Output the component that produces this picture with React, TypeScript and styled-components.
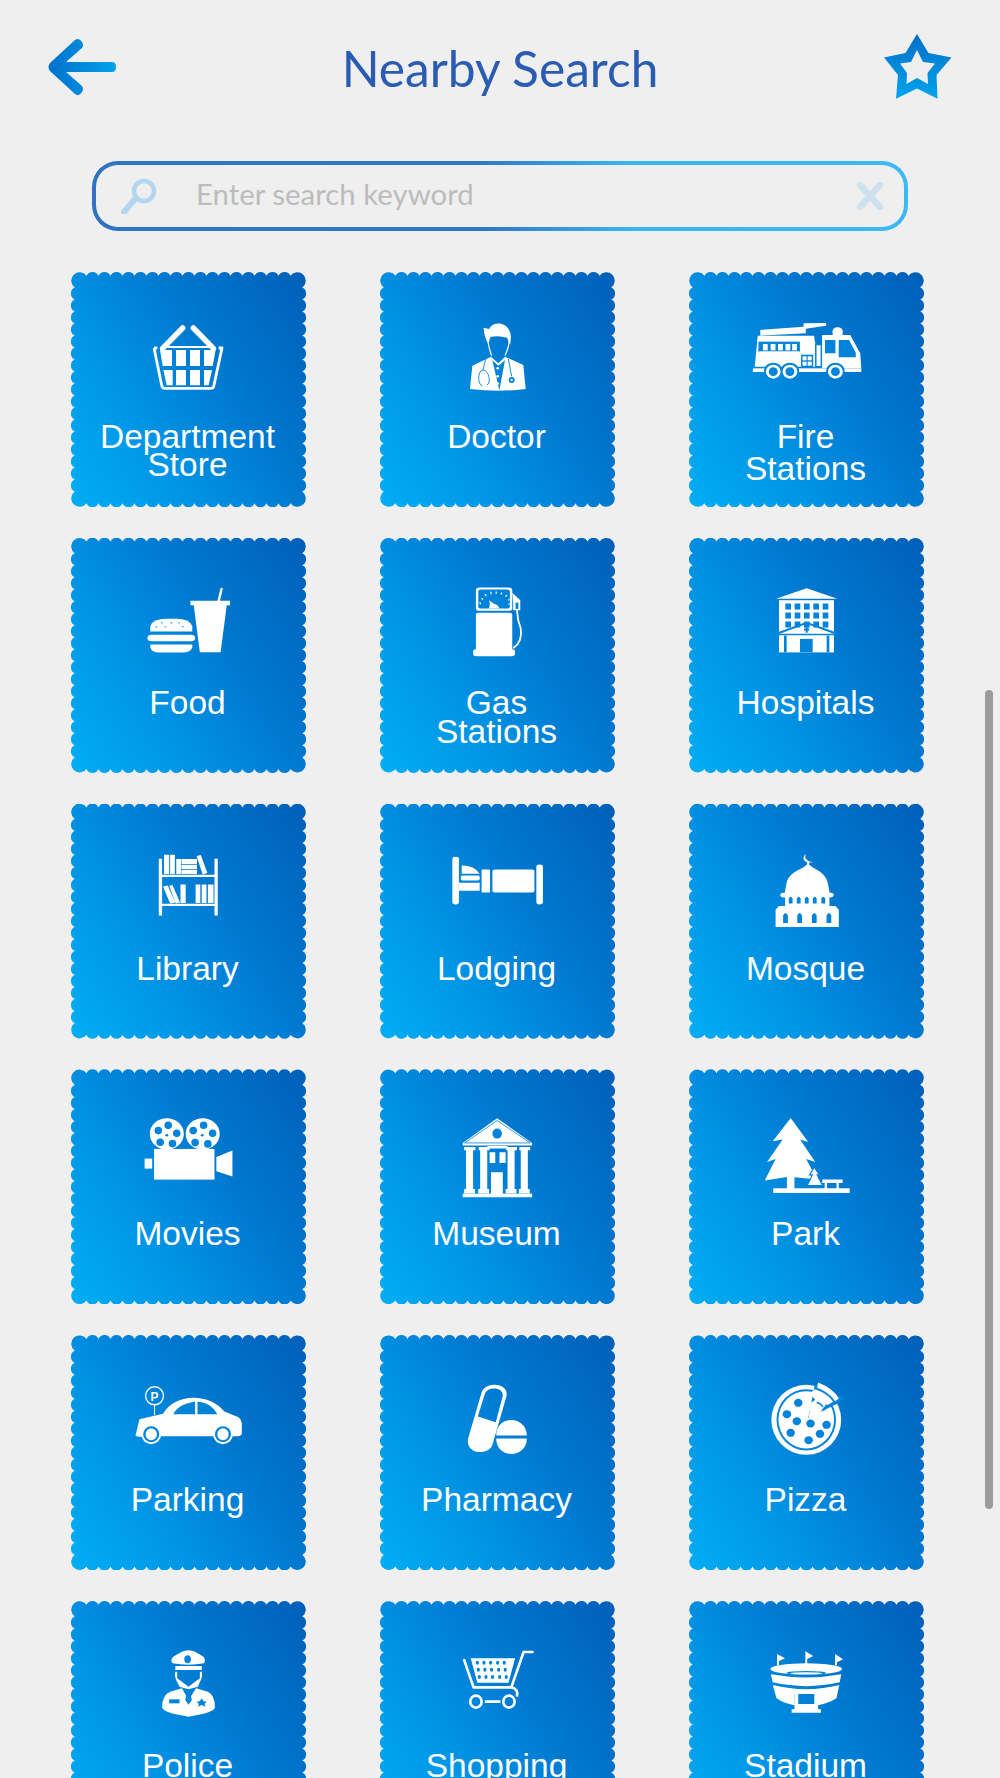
import React from "react";
import styled, { createGlobalStyle } from "styled-components";

const CUT = "#0183d9";

const buildScallop = () => {
  const W = 235, s = 3.8, c = 15.5, n = 17;
  const p = (W - 2 * c) / n;
  const r = 6.58, R = 8.4;
  let d = `M${c} ${s}`;
  for (let i = 0; i < n; i++) d += `a${r} ${r} 0 0 1 ${p} 0`;
  d += `A${R} ${R} 0 1 1 ${W - s} ${c}`;
  for (let i = 0; i < n; i++) d += `a${r} ${r} 0 0 1 0 ${p}`;
  d += `A${R} ${R} 0 1 1 ${W - c} ${W - s}`;
  for (let i = 0; i < n; i++) d += `a${r} ${r} 0 0 1 ${-p} 0`;
  d += `A${R} ${R} 0 1 1 ${s} ${W - c}`;
  for (let i = 0; i < n; i++) d += `a${r} ${r} 0 0 1 0 ${-p}`;
  d += `A${R} ${R} 0 1 1 ${c} ${s}Z`;
  return d;
};

const Global = createGlobalStyle`
  html, body { margin: 0; padding: 0; background: #efefef; }
  body { font-family: "Liberation Sans", Arial, sans-serif; }
`;

const Page = styled.div`
  position: relative;
  width: 1000px;
  height: 1778px;
  overflow: hidden;
  background: #efefef;
`;

const Header = styled.header`
  display: flex;
  align-items: center;
  height: 134px;
  padding: 0 48px 0 46px;
`;

const Title = styled.h1`
  flex: 1;
  margin: 2px 0 0;
  text-align: center;
  font-family: Lato, "Open Sans", sans-serif;
  font-weight: 400;
  font-size: 49.7px;
  line-height: 60px;
  color: #2a5cb2;
`;

const SearchWrap = styled.div`
  padding: 27px 92px 0;
`;

const SearchBar = styled.div`
  display: flex;
  align-items: center;
  height: 70px;
  box-sizing: border-box;
  border: 4.5px solid transparent;
  border-radius: 26px;
  background:
    linear-gradient(#efefef, #efefef) padding-box,
    linear-gradient(84deg, #2f73c1 0%, #2f7ac8 48%, #39b6f3 66%, #3bb9f5 100%) border-box;
  padding: 0 19px 0 23px;
`;

const Placeholder = styled.span`
  flex: 1;
  margin: 0 0 4px 39px;
  font-family: Lato, "Open Sans", sans-serif;
  font-size: 29.4px;
  line-height: 40px;
  color: #bcbcbc;
`;

const Grid = styled.main`
  display: grid;
  grid-template-columns: repeat(3, 235px);
  column-gap: 74px;
  row-gap: 30.8px;
  padding: 41px 0 0 71px;
`;

const Tile = styled.div`
  width: 235px;
  height: 235px;
  display: flex;
  flex-direction: column;
  align-items: center;
  background: linear-gradient(58deg, #00aef4 0%, #0096e6 30%, #0078d0 62%, #005fb8 100%);
  clip-path: path("${buildScallop()}");
`;

const IconCanvas = styled.svg`
  display: block;
  width: 235px;
  height: 140px;
  flex: none;
  fill: #fff;
  & * { vector-effect: non-scaling-stroke; }
`;

const Label = styled.div<{ $lh: number }>`
  margin-top: ${(p) => 25 - p.$lh / 2}px;
  padding-right: 2px;
  font-size: 33.5px;
  line-height: ${(p) => p.$lh}px;
  color: #fff;
  text-align: center;
`;

const Scrollbar = styled.div`
  position: absolute;
  left: 985px;
  top: 690px;
  width: 8px;
  height: 819px;
  border-radius: 4px;
  background: #9b9b9b;
`;

const Z: React.FC<{ x: number; y: number; sx: number; children: React.ReactNode }> = ({ x, y, sx, children }) => (
  <g transform={`translate(${x} ${y}) scale(${1 / sx} ${1 / 3})`}>{children}</g>
);

const rows = (xs: number[], ys: number[], w: number, h: number, fill = CUT) =>
  ys.flatMap((y) => xs.map((x) => <rect key={`${x}-${y}`} x={x} y={y} width={w} height={h} fill={fill} />));

const dots = (pts: number[][], rx: number, ry: number, fill = CUT) =>
  pts.map(([x, y]) => <ellipse key={`${x}-${y}`} cx={x} cy={y} rx={rx} ry={ry} fill={fill} />);

const Basket = () => (
  <Z x={-21} y={-12} sx={3}>
    <path d="M338 265L398 204M490 265L430 204" stroke="#fff" strokeWidth={5.5} strokeLinecap="round" />
    <path d="M352 261H480" stroke="#fff" strokeWidth={2} />
    <path d="M312 264H322M506 264H516L491 380Q489 385 482 385H345Q338 385 336 380L312 264" stroke="#fff" strokeWidth={2.8} fill="none" strokeLinejoin="round" />
    <path d="M330 270H366V318H338ZM378 270H408V318H378ZM420 270H450V318H420ZM462 270H497L488 318H462ZM340 330H368V376H350ZM378 330H408V376H378ZM420 330H450V376H420ZM462 330H486L476 376H462Z" />
  </Z>
);

const Doctor = () => (
  <Z x={75} y={43} sx={3}>
    <path d="M86 38L102 42C115 18 152 22 162 45C170 58 168 75 165 90L156 68Q130 60 106 66L100 88Q86 62 86 38Z" />
    <path d="M100 72C98 90 104 105 110 122M162 72C164 90 158 105 150 122" stroke="#fff" strokeWidth={1.2} fill="none" />
    <path d="M45 222L52 152L108 125L130 145L150 125L205 150L212 222Q130 232 45 222Z" />
    <path d="M112 136L130 152L150 136L133 226Z" fill={CUT} />
    {dots([[128, 160], [128, 184], [128, 206]], 4, 4, "#fff")}
    <path d="M92 132L84 165M84 165C66 168 68 210 82 212M84 165C104 168 108 205 96 210M160 132L170 184" stroke={CUT} strokeWidth={0.9} fill="none" />
    <circle cx={170} cy={195} r={9} fill={CUT} />
    <circle cx={170} cy={195} r={3.5} />
  </Z>
);

const FireTruck = () => (
  <Z x={-319} y={-2} sx={2.703}>
    <path d="M1055 180L1172 170V160L1233 159V167L1178 176V190L1055 197Z" />
    <path d="M1048 197H1200L1204 223V290H1040Z" />
    <rect x="1050" y="215" width="112" height="32" fill={CUT} />
    {rows([1062, 1083, 1103, 1123, 1141], [222], 13, 19, "#fff")}
    <path d="M1052 247H1161" stroke="#fff" strokeWidth={2} />
    <rect x="1165" y="254" width="33" height="40" fill={CUT} />
    {rows([1169, 1183], [259, 275], 11, 12, "#fff")}
    <rect x="1203" y="222" width="19" height="72" fill={CUT} />
    <rect x="1207" y="226" width="11" height="62" />
    <rect x="1250" y="172" width="28" height="30" rx="13" />
    <path d="M1222 195H1298L1325 250L1328 295H1222Z" />
    <path d="M1230 210H1258V250H1230ZM1267 210H1295L1313 248V262H1267Z" fill={CUT} />
    <rect x="1035" y="295" width="293" height="11" />
    {[1090, 1135, 1258].map((cx) => (
      <g key={cx}>
        <ellipse cx={cx} cy={303} rx={25} ry={25} fill={CUT} />
        <ellipse cx={cx} cy={305} rx={20} ry={21} />
        <ellipse cx={cx} cy={305} rx={12} ry={13} fill={CUT} />
      </g>
    ))}
  </Z>
);

const Food = () => (
  <Z x={59} y={32.2} sx={2.119}>
    <path d="M188 92L194 56" stroke="#fff" strokeWidth={2.4} strokeLinecap="round" />
    <path d="M128 92H212V105H205L192 246H148L135 105H128Z" />
    <path d="M43 184V168Q48 146 78 146H98Q126 146 132 168V184Z" />
    {dots([[67, 158], [88, 158], [104, 158], [56, 170], [75, 170], [112, 170]], 2, 2)}
    <rect x="37" y="194" width="101" height="19" rx="9" />
    <path d="M43 223H132V232Q128 247 112 247H62Q46 247 43 232Z" />
  </Z>
);

const GasPump = () => (
  <Z x={-250} y={32.2} sx={2.119}>
    <rect x="733" y="52" width="77" height="70" rx="8" />
    <rect x="738" y="58" width="67" height="57" rx="6" fill={CUT} />
    <path d="M743 102L741 96M748 88L745 84M755 78L752 72M765 72V65M776 71V64M786 73L788 67M796 79L799 75M801 90L804 88M802 102L805 101" stroke="#fff" strokeWidth={1.2} />
    <path d="M760 115Q764 105 761 90L771 101Q782 105 782 115Z" />
    <rect x="733" y="128" width="77" height="115" rx="6" />
    <rect x="727" y="237" width="89" height="21" rx="7" />
    <path d="M820 120Q821 150 828 175Q832 215 812 234" stroke="#fff" strokeWidth={1.8} fill="none" />
    <path d="M810 68L827 90V120H812V96Z" />
    <rect x="817" y="97" width="6" height="19" fill={CUT} />
  </Z>
);

const Hospital = () => (
  <Z x={71} y={42.2} sx={3}>
    <path d="M48 56L140 24L232 56Z" />
    <rect x="57" y="60" width="165" height="156" />
    {rows([76, 104, 132, 160, 188], [70, 97, 124], 17, 18)}
    <path d="M58 166H222V216H58Z" />
    <path d="M52 160L140 128L228 160" stroke={CUT} strokeWidth={2} fill="none" />
    <path d="M52 163H228" stroke={CUT} strokeWidth={1.5} />
    <path d="M132 145H137V138H143V145H148V151H143V158H137V151H132Z" fill={CUT} />
    <rect x="72" y="166" width="8" height="50" fill={CUT} />
    <rect x="200" y="166" width="8" height="50" fill={CUT} />
    <rect x="120" y="176" width="38" height="40" fill={CUT} />
  </Z>
);

const Library = () => (
  <Z x={59} y={36.4} sx={2.119}>
    <path d="M61 55H68V225H61ZM179 55H186V225H179ZM61 103H186V110H61ZM61 190H186V197H61Z" />
    <path d="M72 43H83V101H72ZM85 43H95V101H85ZM98 56H108V101H98ZM109 56H142V71H109ZM109 73H142V86H109ZM109 88H142V101H109ZM141 47L150 44L164 98L154 102Z" />
    <path d="M70 138L80 135L96 186L85 189ZM83 136L90 134L106 186L97 189ZM107 132H118V188H107ZM139 132H149V188H139ZM152 132H162V188H152ZM165 132H177V188H165Z" />
  </Z>
);

const Bed = () => (
  <Z x={-250} y={36.4} sx={2.119}>
    <rect x="683" y="49" width="14" height="143" rx="7" />
    <rect x="861" y="72" width="14" height="120" rx="7" />
    <path d="M703 75Q730 75 741 100H703Z" />
    <rect x="701" y="105" width="40" height="15" rx="4" />
    <rect x="697" y="127" width="44" height="24" />
    <rect x="745" y="87" width="18" height="69" rx="2" />
    <rect x="768" y="87" width="89" height="69" rx="5" />
  </Z>
);

const Mosque = () => (
  <Z x={-559} y={36.4} sx={2.119}>
    <path d="M1433 40Q1425 58 1447 66Q1438 68 1431 63Q1422 52 1433 40Z" />
    <rect x="1435" y="62" width="4" height="12" />
    <path d="M1437 70C1425 88 1396 92 1391 130L1387 160H1483L1479 130C1474 92 1449 88 1437 70Z" />
    <rect x="1378" y="157" width="113" height="14" rx="7" />
    <rect x="1388" y="168" width="94" height="32" />
    <path d="M1375 197H1495L1502 208V260H1368V208Z" />
    {[1400, 1417, 1434, 1451, 1469].map((x) => (
      <path key={x} d="M-4 189V174Q0 164 4 174V189Z" transform={`translate(${x} 0)`} fill={CUT} />
    ))}
    {[1389, 1419, 1450, 1481].map((x) => (
      <path key={x} d="M-5 248V225Q0 210 5 225V248Z" transform={`translate(${x} 0)`} fill={CUT} />
    ))}
  </Z>
);

const Movies = () => (
  <Z x={59} y={30.6} sx={2.119}>
    <ellipse cx="78" cy="103" rx="36" ry="47" />
    <ellipse cx="154" cy="103" rx="36" ry="47" />
    {dots([[81, 77], [60, 93], [99, 101], [64, 128], [90, 132], [156, 77], [134, 93], [175, 101], [138, 129], [165, 133]], 8, 11.5)}
    {dots([[78, 107], [153, 107]], 3, 4)}
    <rect x="51" y="148" width="128" height="92" />
    <path d="M183 172L217 153V231L183 215Z" />
    <rect x="31" y="177" width="16" height="30" />
  </Z>
);

const Museum = () => (
  <Z x={-250} y={30.6} sx={2.119}>
    <path d="M778 56L852 130V138H705V130Z" />
    <path d="M778 63L848 130H709Z" fill="none" stroke={CUT} strokeWidth={0.8} />
    <ellipse cx="778" cy="102" rx="10" ry="15" fill={CUT} />
    <path d="M708 142H732V152H727V268H731V282H708V268H712V152H708ZM739 142H762V152H757V268H761V282H738V268H742V152H739ZM797 142H820V152H815V268H819V282H796V268H800V152H797ZM825 142H848V152H843V268H847V282H824V268H828V152H825Z" />
    <path d="M757 139H800V147H757Z" />
    <path d="M762 158H774V190H762ZM783 158H796V190H783ZM765 218H790V284H765Z" />
    <rect x="705" y="282" width="147" height="11" />
  </Z>
);

const Park = () => (
  <Z x={-559} y={30.6} sx={2.119}>
    <path d="M1400 55L1437 127L1420 120L1452 187L1433 178L1456 240L1408 233V268H1392V232L1345 243L1368 178L1350 187L1383 120L1362 125Z" />
    <path d="M1450 203L1461 226H1456L1468 258H1435L1446 226H1440Z" stroke={CUT} strokeWidth={1.2} />
    <rect x="1363" y="266" width="162" height="14" />
    <path d="M1467 240H1510V250H1502V268H1497V250H1477V268H1472V250H1467Z" />
  </Z>
);

const Car = () => (
  <Z x={59} y={34.8} sx={2.119}>
    <ellipse cx="52" cy="78" rx="19" ry="27" fill="none" stroke="#fff" strokeWidth={1.4} />
    <text transform="translate(52 93) scale(2.119 3)" textAnchor="middle" fontFamily="'Liberation Sans', sans-serif" fontWeight="700" fontSize="12" fill="#fff">P</text>
    <path d="M52 105V136" stroke="#fff" strokeWidth={1} />
    <path d="M12 195L20 148L70 132Q90 85 135 84Q175 85 200 125L230 142Q237 150 237 165V190Q237 198 228 199H60L20 201Q10 200 12 195Z" />
    <path d="M92 133Q100 105 138 95V133ZM143 95Q172 98 185 133H143Z" fill={CUT} />
    {[45, 197].map((cx) => (
      <g key={cx}>
        <ellipse cx={cx} cy={193} rx={21} ry={30} />
        <ellipse cx={cx} cy={193} rx={17} ry={24} fill={CUT} />
        <ellipse cx={cx} cy={193} rx={12} ry={18} />
      </g>
    ))}
  </Z>
);

const Pills = () => (
  <Z x={-250} y={34.8} sx={2.119}>
    <path fillRule="evenodd" d="M745 68C752 36 802 36 798 78L768 225C760 258 712 255 716 208ZM752 72L737 140L775 157L790 78C792 52 758 48 752 72Z" />
    <path d="M776 197C776 135 840 135 841 197ZM776 206C776 268 840 268 841 206Z" />
  </Z>
);

const Pizza = () => (
  <Z x={-559} y={34.8} sx={2.119}>
    <ellipse cx="1433" cy="150" rx="74" ry="105" />
    <ellipse cx="1433" cy="150" rx="63" ry="92" fill={CUT} />
    <ellipse cx="1433" cy="150" rx="59" ry="86" />
    {dots([[1416, 99], [1392, 133], [1413, 154], [1442, 161], [1476, 165], [1400, 189], [1462, 192], [1438, 211]], 9, 12)}
    <path d="M1437 145L1452 40L1515 85L1500 100Z" fill={CUT} />
    <path d="M1458 38Q1490 55 1502 86L1494 94Q1480 66 1456 54Z" />
    <path d="M1438 145L1442 100L1452 90L1440 70L1452 58Q1480 72 1490 96L1470 112L1462 130Z" />
    <path d="M1455 98Q1466 102 1468 112M1476 104L1470 122" stroke={CUT} strokeWidth={1.5} fill="none" />
  </Z>
);

const Police = () => (
  <Z x={59} y={29} sx={2.119}>
    <path d="M90 100C82 80 100 75 110 65Q124 56 138 65C148 75 165 80 157 100Q124 108 90 100Z" />
    <ellipse cx="122" cy="88" rx="7" ry="12" fill={CUT} />
    <rect x="96" y="108" width="56" height="12" />
    <path d="M96 125C92 140 102 160 105 170L124 178L144 170C146 160 156 140 152 125L148 125V145L124 170L100 145V125Z" />
    <path d="M68 232Q68 195 85 185L110 175L124 210L140 175L165 185Q180 195 180 232Q180 248 124 260Q68 248 68 232Z" />
    <path d="M118 178H130L124 190ZM120 190H128L131 210L124 224L117 210Z" fill={CUT} />
    <rect x="83" y="208" width="22" height="12" fill={CUT} />
    <path d="M152 205L156 214L163 215L158 221L160 230L152 225L144 230L146 221L141 215L148 214Z" fill={CUT} />
  </Z>
);

const Cart = () => (
  <Z x={-250} y={29} sx={2.119}>
    <path d="M853 66H834L808 172H728L708 90" stroke="#fff" strokeWidth={2.6} fill="none" strokeLinecap="round" strokeLinejoin="round" />
    <path d="M808 172Q824 178 820 200" stroke="#fff" strokeWidth={2.6} fill="none" />
    <path d="M722 85H816L802 158H736Z" />
    {[98, 119, 141].flatMap((y) => [736, 750, 764, 779, 793].map((x) => (
      <ellipse key={`${x}-${y}`} cx={x + (y - 98) * 0.1} cy={y} rx={3.4} ry={6} fill={CUT} />
    )))}
    <ellipse cx="733" cy="215" rx="12" ry="18" fill="none" stroke="#fff" strokeWidth={2.6} />
    <ellipse cx="803" cy="215" rx="12" ry="18" fill="none" stroke="#fff" strokeWidth={2.6} />
    <path d="M752 215H785" stroke="#fff" strokeWidth={2.6} />
  </Z>
);

const Stadium = () => (
  <Z x={-559} y={29} sx={2.119}>
    <path d="M1371 72L1388 85L1375 94V106H1371ZM1431 64L1448 78L1435 87V102H1431ZM1494 72L1511 88L1498 97V106H1494Z" />
    <ellipse cx="1433" cy="117" rx="76" ry="17" />
    <ellipse cx="1433" cy="129" rx="42" ry="6" fill={CUT} />
    <ellipse cx="1433" cy="130" rx="34" ry="3.5" />
    <path d="M1358 133Q1433 152 1507 133L1504 157Q1433 180 1362 157Z" />
    <path d="M1362 165Q1433 190 1503 165L1497 205Q1480 220 1458 226V192H1408V226Q1385 220 1370 205Z" />
    <path d="M1408 190H1416V222H1450V190H1458V238H1464V248H1402V238H1408Z" />
  </Z>
);

const tiles: { label: React.ReactNode; lh: number; icon: React.FC }[] = [
  { label: <>Department<br />Store</>, lh: 28, icon: Basket },
  { label: "Doctor", lh: 32, icon: Doctor },
  { label: <>Fire<br />Stations</>, lh: 32, icon: FireTruck },
  { label: "Food", lh: 32, icon: Food },
  { label: <>Gas<br />Stations</>, lh: 29, icon: GasPump },
  { label: "Hospitals", lh: 32, icon: Hospital },
  { label: "Library", lh: 32, icon: Library },
  { label: "Lodging", lh: 32, icon: Bed },
  { label: "Mosque", lh: 32, icon: Mosque },
  { label: "Movies", lh: 32, icon: Movies },
  { label: "Museum", lh: 32, icon: Museum },
  { label: "Park", lh: 32, icon: Park },
  { label: "Parking", lh: 32, icon: Car },
  { label: "Pharmacy", lh: 32, icon: Pills },
  { label: "Pizza", lh: 32, icon: Pizza },
  { label: "Police", lh: 32, icon: Police },
  { label: "Shopping", lh: 32, icon: Cart },
  { label: "Stadium", lh: 32, icon: Stadium },
];

const BackArrow = () => (
  <svg width="72" height="62" viewBox="46 36 72 62">
    <defs>
      <linearGradient id="backGrad" x1="0" x2="1" y1="0" y2="0">
        <stop offset="0" stopColor="#0072cb" />
        <stop offset="1" stopColor="#00a2ea" />
      </linearGradient>
    </defs>
    <path fill="url(#backGrad)" d="M75 40Q79 37 82 42Q84 45 82 48L66 62H112Q116 62 116 67Q116 72 112 72H66L82 86Q84 89 82 92Q79 97 75 94L50 71Q47 67 50 63Z" />
  </svg>
);

const StarIcon = () => (
  <svg width="70" height="68" viewBox="882 33 70 68">
    <defs>
      <linearGradient id="starGrad" x1="0" x2="0" y1="0" y2="1">
        <stop offset="0" stopColor="#006ec7" />
        <stop offset="1" stopColor="#00a4ee" />
      </linearGradient>
    </defs>
    <path fill="url(#starGrad)" fillRule="evenodd" d="M917 34L928.5 53L951.5 57.5L936.5 75L937.5 98.7L917 88.5L896 98.7L898 75L884 57.5L905.5 53ZM917 50L911 62L900 63.5L907 73L906.5 84L917 78L928 84L927.5 73L935 63.5L923 62Z" />
  </svg>
);

const SearchIcon = () => (
  <svg width="38" height="36" viewBox="119 177 38 36">
    <circle cx="144" cy="190" r="10" fill="none" stroke="#b2d6ef" strokeWidth="4.5" />
    <path d="M135 198L124 211" stroke="#b2d6ef" strokeWidth="6" strokeLinecap="round" />
  </svg>
);

const ClearIcon = () => (
  <svg width="30" height="28" viewBox="0 0 30 28">
    <path d="M5 3L25 25M25 3L5 25" stroke="#cde1ee" strokeWidth="6.5" strokeLinecap="round" />
  </svg>
);

export default function App() {
  return (
    <Page>
      <Global />
      <Header>
        <BackArrow />
        <Title>Nearby Search</Title>
        <StarIcon />
      </Header>
      <SearchWrap>
        <SearchBar>
          <SearchIcon />
          <Placeholder>Enter search keyword</Placeholder>
          <ClearIcon />
        </SearchBar>
      </SearchWrap>
      <Grid>
        {tiles.map(({ label, lh, icon: Icon }, i) => (
          <Tile key={i}>
            <IconCanvas viewBox="0 0 235 140">
              <Icon />
            </IconCanvas>
            <Label $lh={lh}>{label}</Label>
          </Tile>
        ))}
      </Grid>
      <Scrollbar />
    </Page>
  );
}
